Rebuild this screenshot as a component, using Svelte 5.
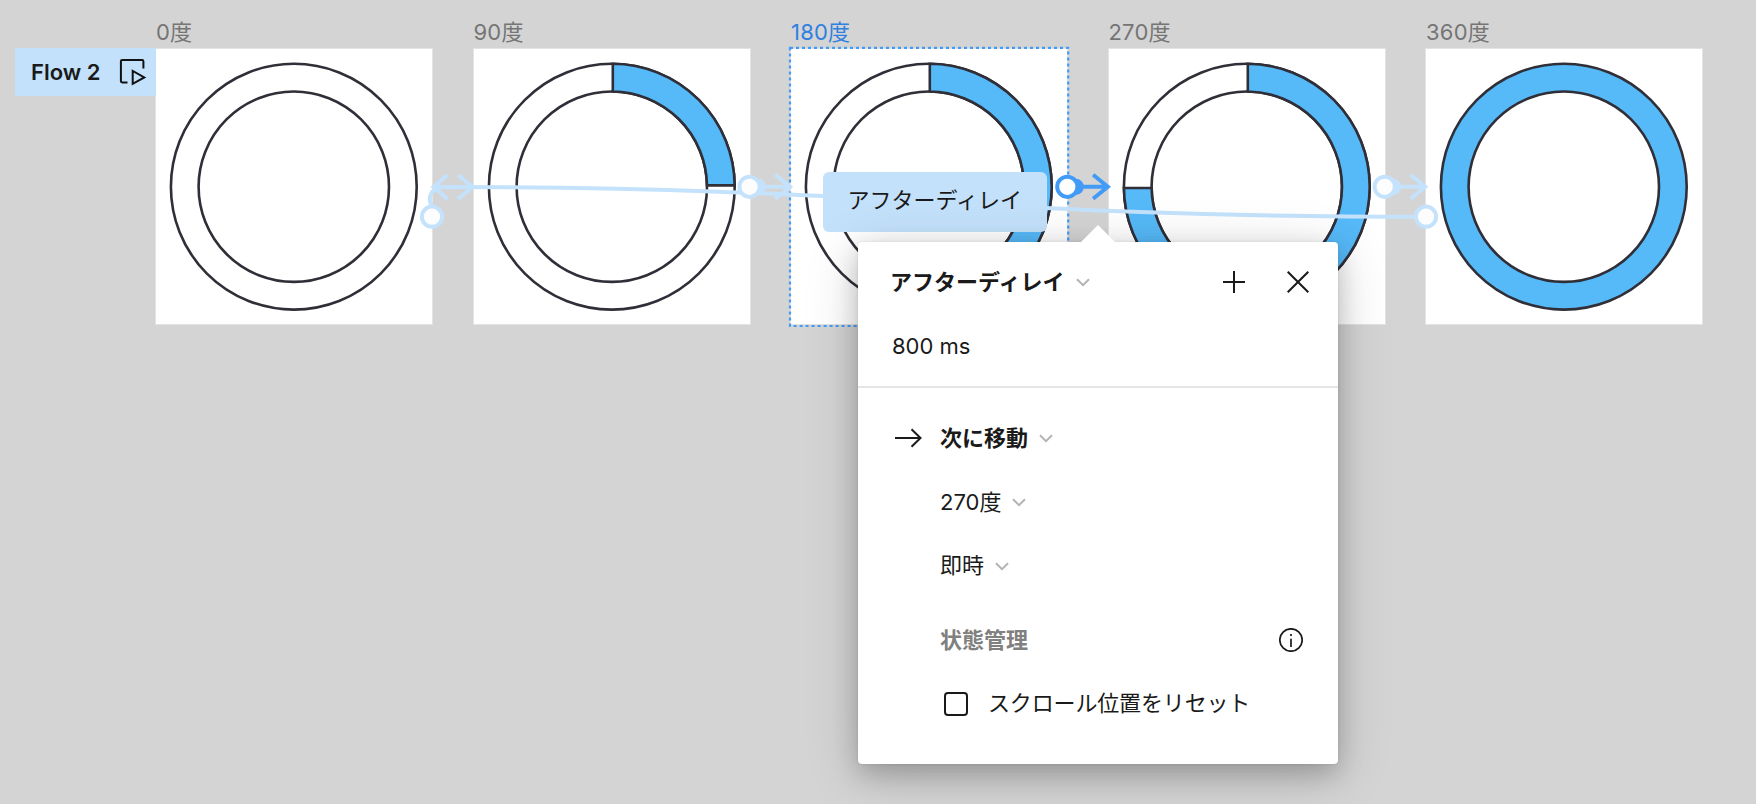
<script>
  const R = 122.9;
  const r = 95.2;

  const frames = [
    { name: '0度', x: 156, angle: 0 },
    { name: '90度', x: 473.5, angle: 90 },
    { name: '180度', x: 791, angle: 180, selected: true },
    { name: '270度', x: 1108.5, angle: 270 },
    { name: '360度', x: 1426, angle: 360 }
  ];

  const links = [
    { x: 749.5 },
    { x: 1067.3, active: true },
    { x: 1384.7 }
  ];

  // Ring sector starting at twelve o'clock, shifted by half a stroke.
  function sector(angle) {
    if (angle === 90) return `M1 ${-R} A${R} ${R} 0 0 1 ${R} -1.3 H${r} A${r} ${r} 0 0 0 1 ${-r} Z`;
    if (angle === 180) return `M1 ${-R} A${R} ${R} 0 0 1 ${R} 0 A${R} ${R} 0 0 1 1 ${R} V${r} A${r} ${r} 0 0 0 ${r} 0 A${r} ${r} 0 0 0 1 ${-r} Z`;
    if (angle === 270) return `M1 ${-R} A${R} ${R} 0 0 1 ${R} 0 A${R} ${R} 0 0 1 0 ${R} A${R} ${R} 0 0 1 ${-R} 1.3 H${-r} A${r} ${r} 0 0 0 0 ${r} A${r} ${r} 0 0 0 ${r} 0 A${r} ${r} 0 0 0 1 ${-r} Z`;
    return '';
  }
</script>

{#snippet chevron()}
  <svg class="chevron" width="14" height="9" viewBox="0 0 14 9"><path d="M1 1.2 7 7.2 13 1.2" /></svg>
{/snippet}

<main class="canvas">
  {#each frames as f}
    <section class="node" style="left:{f.x}px">
      <span class="label" class:selected={f.selected}>{f.name}</span>
      <div class="artboard">
        <svg width="276" height="276" viewBox="-137.8 -137.7 276 276">
          <circle class="ring" class:full={f.angle === 360} r={R} />
          <circle class="ring hole" {r} />
          {#if sector(f.angle)}<path class="ring full" d={sector(f.angle)} />{/if}
        </svg>
      </div>
    </section>
  {/each}

  <div class="flow">
    <span>Flow 2</span>
    <svg width="28" height="28" viewBox="0 0 28 28">
      <path d="M8.5 24.4H3.2Q1.9 24.4 1.9 23.1V3.2Q1.9 1.9 3.2 1.9H23.1Q24.4 1.9 24.4 3.2V10.6" />
      <path d="M13.7 12.9V25.9L25.3 19.4Z" />
    </svg>
  </div>

  <svg class="overlay" width="1756" height="804" viewBox="0 0 1756 804">
    <rect class="outline" x="790" y="47.8" width="278.2" height="278.2" />
    <g class="link">
      <path d="M1426 216.7C962 216.7 896 187 434 187" />
      <path d="M447.5 175 433.5 187 447.5 199" />
      <path d="M432 206C427.5 199 429.5 187 445 187H472" />
      <path d="M458 175 472.5 187 458 199" />
      <circle cx="432" cy="216.7" r="10.1" />
      <circle cx="1426" cy="216.7" r="10.1" />
    </g>
    {#each links as l}
      <g class="link" class:active={l.active} transform="translate({l.x} 186.8)">
        <path d="M9 0H40.5M25.8 -12 40.5 0 25.8 12" />
        <circle class="blob" cx="8.6" r="8" />
        <circle r="10.1" />
      </g>
    {/each}
  </svg>

  <div class="pill">アフターディレイ</div>

  <div class="panel">
    <svg class="tip" width="40" height="20" viewBox="0 0 40 20"><path d="M0 20 20 0 40 20Z" /></svg>
    <div class="top">
      <div class="row">
        <b>アフターディレイ</b>{@render chevron()}
        <svg class="plus" width="22" height="22" viewBox="0 0 22 22"><path d="M11 0V22M0 11H22" /></svg>
        <svg class="close" width="22" height="22" viewBox="0 0 22 22"><path d="M.7 .7 21.3 21.3M21.3 .7.7 21.3" /></svg>
      </div>
      <div class="row">800 ms</div>
    </div>
    <div class="body">
      <div class="row first">
        <svg class="arrow" width="27" height="20" viewBox="0 0 27 20"><path d="M0 10H25.5M16.5 1.2 25.5 10 16.5 18.8" /></svg>
        <b>次に移動</b>{@render chevron()}
      </div>
      <div class="row">270度{@render chevron()}</div>
      <div class="row"><span class="text">即時</span>{@render chevron()}</div>
      <div class="row state">
        <b>状態管理</b>
        <svg class="info" width="24" height="24" viewBox="0 0 24 24"><circle cx="12" cy="12" r="11.2" /><path d="M12 10.7V19M12 6V8" /></svg>
      </div>
      <label class="row"><span class="check"></span><span class="text option">スクロール位置をリセット</span></label>
    </div>
  </div>
</main>

<style>
  :global(body) { margin: 0; background: #d4d4d4; }
  .canvas {
    position: relative; width: 1756px; height: 804px; overflow: hidden; background: #d4d4d4;
    font-family: Inter, 'Noto Sans CJK JP', sans-serif; font-size: 22px; line-height: 32px; color: #1a1a1a;
  }
  svg { display: block; flex: none; fill: none; }
  .node { position: absolute; top: 16px; }
  .label { display: block; height: 33px; color: #757575; letter-spacing: .2px; white-space: nowrap; }
  .label.selected { color: #2f80e0; }
  .artboard { width: 276px; height: 275px; background: #fff; box-shadow: 0 0 0 1px rgba(255, 255, 255, .35); }
  .ring { stroke: #302f38; stroke-width: 2.6; }
  .full { fill: #56b9f8; }
  .hole { fill: #fff; }
  .flow {
    position: absolute; left: 15px; top: 48px; width: 141px; height: 48px; box-sizing: border-box; padding: 0 9px 0 16px;
    display: flex; align-items: center; justify-content: space-between; background: #c4e1fb; font-weight: 600; white-space: nowrap;
  }
  .flow path { stroke: #111; stroke-width: 2; }
  .overlay { position: absolute; inset: 0; }
  .outline { stroke: #429bf7; stroke-width: 2.2; stroke-dasharray: 3 3; }
  .link { stroke: #c4e2fc; stroke-width: 4; }
  .link circle { fill: #fdfdfd; }
  .link.active { stroke: #429bf7; }
  .link .blob { fill: #c4e2fc; stroke: none; }
  .link.active .blob { fill: #429bf7; }
  .pill {
    position: absolute; left: 823px; top: 172px; width: 223.5px; height: 60px; border-radius: 6px; background: #c4e1fb;
    line-height: 56px; text-align: center;
  }
  .panel {
    position: absolute; left: 858px; top: 242px; width: 480px; height: 522px; border-radius: 4px; background: #fff;
    box-shadow: 0 10px 56px rgba(0, 0, 0, .16), 0 10px 26px rgba(0, 0, 0, .2), 0 0 3px rgba(0, 0, 0, .1);
  }
  .tip { position: absolute; left: 220px; top: -17px; fill: #fff; }
  .row { height: 64px; display: flex; align-items: center; white-space: nowrap; }
  .top { padding: 8px 29px 8px 34px; border-bottom: 2px solid #e5e5e5; }
  .top b { margin-left: -2px; }
  .body { padding: 18px 35px 0 82px; }
  .chevron { margin-left: 12px; stroke: #b3b3b3; stroke-width: 2; }
  .body .chevron { margin-left: 11px; }
  .text { margin-bottom: 2px; }
  .option { letter-spacing: -.15px; }
  .plus, .close, .arrow, .info { stroke: #1a1a1a; stroke-width: 2; }
  .plus { margin-left: auto; }
  .close { margin-left: 42px; }
  .first { margin-left: -45px; }
  .arrow { margin-right: 18px; }
  .state { margin-top: 10px; color: #808080; justify-content: space-between; }
  .info { stroke-width: 1.7; }
  .check { width: 24px; height: 24px; box-sizing: border-box; border: 2px solid #1a1a1a; border-radius: 4px; margin: 0 20px 0 4px; }
</style>
